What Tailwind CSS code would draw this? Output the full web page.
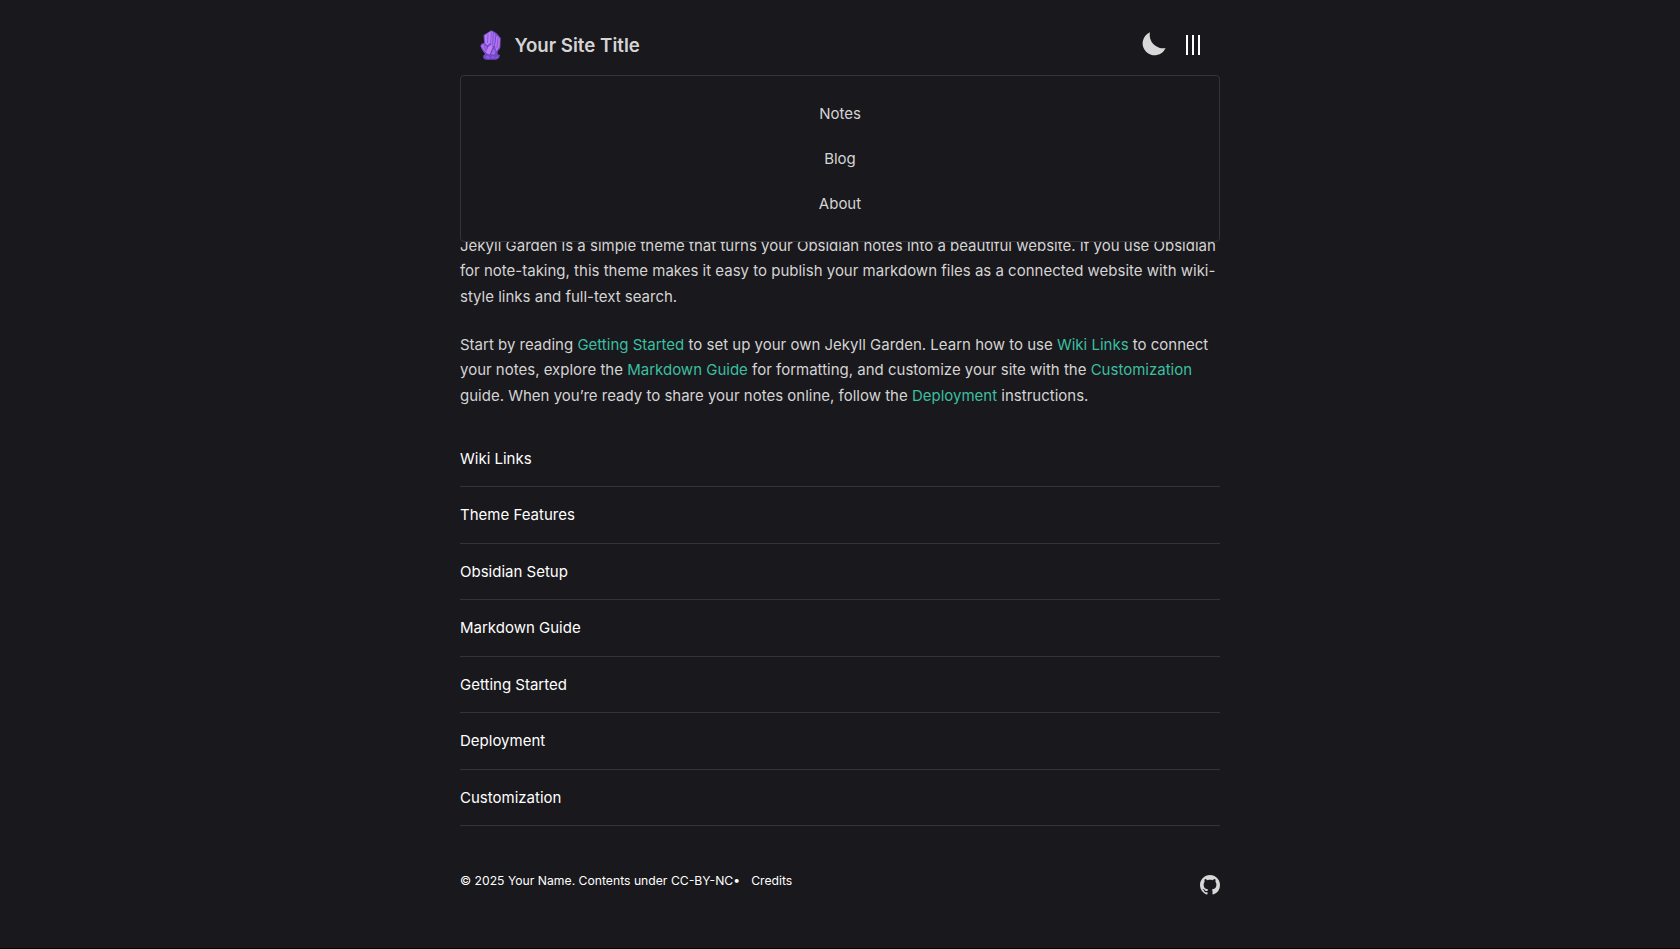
<!DOCTYPE html>
<html lang="en">
<head>
<meta charset="utf-8">
<title>Your Site Title</title>
<script src="https://cdn.jsdelivr.net/npm/@tailwindcss/browser@4"></script>
</head>
<body class="h-[949px] overflow-hidden border-b border-black bg-[#19181c] font-['Inter',sans-serif] text-[15px] leading-[25.5px] text-[#d4d4d4]">
<div class="relative mx-auto w-[760px]">
  <header class="flex h-[75px] items-start justify-between px-5 pt-[30px]">
    <a class="flex items-center" href="#">
      <svg class="h-[30px] w-[22px]" viewBox="0 0 22 30">
        <path d="M3.500 5 11.500 .2 16.500 3 20.800 8 20.300 18 17.500 22 18 24.500 20 25 19 28 16 29.800 6 29.800 3.500 28.500 3 26 5 24 2 20 .3 16 1.500 13.500 4 13z" fill="#7048c8"/>
        <path d="M4.500 5.500 11 1 10.500 13 7 15.500 5 13z" fill="#b57af6"/>
        <path d="M11.500 1 15.500 4 14.300 15.500 10.800 17z" fill="#a66ff4"/>
        <path d="M16.500 5 20 9 19.500 17 16 21.500 15 16z" fill="#b973ec"/>
        <path d="M.8 16 3.500 13.800 6.500 17 7 22 5 22z" fill="#ac6dec"/>
        <path d="M8 17.500 10 15 12.800 17 9.500 24.500 6 23z" fill="#bf7ef0"/>
        <path d="M11 24 13.800 18.500 15.500 22.500 14 25z" fill="#a068e8"/>
        <path d="M4.500 27 8 25.500 10 27.500 9 29zM11 28 13 25.500 15 28zM15.500 27 19 26 16 28.800z" fill="#9258dc"/>
        <path d="M8 4 7.500 13M13.500 3 12.500 15M18 8 17 18M4 15 6 21" fill="none" stroke="#7048c8" stroke-width=".7"/>
      </svg>
      <span class="relative top-px ml-[12.4px] text-[18.7px] font-semibold leading-[30px]">Your Site Title</span>
    </a>
    <div class="flex items-start">
      <svg class="mt-[2px] h-6 w-6" viewBox="0 0 24 24" fill="#d8d8d8"><path d="M8 .2A13.400 13.400 0 0 0 23.600 16.100 12 12 0 1 1 8 .2z"/></svg>
      <div class="ml-5 mt-[5px] flex h-5 gap-1"><i class="w-0.5 bg-white"></i><i class="w-0.5 bg-white"></i><i class="w-0.5 bg-white"></i></div>
    </div>
  </header>
  <nav class="absolute left-0 top-[75px] z-10 flex h-[167px] w-full flex-col items-center rounded-[4px] border border-[#343338] bg-[#19181c] pt-[15px]">
    <a class="h-[45px] leading-[45px]" href="#">Notes</a>
    <a class="h-[45px] leading-[45px]" href="#">Blog</a>
    <a class="h-[45px] leading-[45px]" href="#">About</a>
  </nav>
  <main class="pt-[157.7px]">
    <p class="mb-[22.5px]">Jekyll Garden is a simple theme that turns your Obsidian notes into a beautiful website. If you use Obsidian for note-taking, this theme makes it easy to publish your markdown files as a connected website with wiki-style links and full-text search.</p>
    <p class="mb-[22.5px]">Start by reading <a class="text-[#3bbfa1]" href="#">Getting Started</a> to set up your own Jekyll Garden. Learn how to use <a class="text-[#3bbfa1]" href="#">Wiki Links</a> to connect your notes, explore the <a class="text-[#3bbfa1]" href="#">Markdown Guide</a> for formatting, and customize your site with the <a class="text-[#3bbfa1]" href="#">Customization</a> guide. When you’re ready to share your notes online, follow the <a class="text-[#3bbfa1]" href="#">Deployment</a> instructions.</p>
    <ul class="text-white">
      <li class="border-b border-[#343338] py-[15px]">Wiki Links</li>
      <li class="border-b border-[#343338] py-[15px]">Theme Features</li>
      <li class="border-b border-[#343338] py-[15px]">Obsidian Setup</li>
      <li class="border-b border-[#343338] py-[15px]">Markdown Guide</li>
      <li class="border-b border-[#343338] py-[15px]">Getting Started</li>
      <li class="border-b border-[#343338] py-[15px]">Deployment</li>
      <li class="border-b border-[#343338] py-[15px]">Customization</li>
    </ul>
  </main>
  <footer class="mt-[44.8px] flex items-start justify-between text-[12.2px] leading-[20.4px] text-white">
    <div class="flex"><span>© 2025 Your Name. Contents under CC-BY-NC•</span><a class="ml-[11px]" href="#">Credits</a></div>
    <svg class="mt-[4px] h-5 w-5" viewBox="0 0 16 16" fill="#d8d8d8"><path d="M8 0C3.580 0 0 3.580 0 8c0 3.540 2.290 6.530 5.470 7.590.4.070.55-.17.55-.38 0-.19-.01-.82-.01-1.490-2.010.37-2.530-.49-2.690-.94-.09-.23-.48-.94-.82-1.130-.28-.15-.68-.52-.01-.53.63-.01 1.080.58 1.230.82.72 1.210 1.870.87 2.330.66.070-.52.28-.87.51-1.070-1.780-.2-3.640-.89-3.640-3.950 0-.87.31-1.590.82-2.150-.08-.2-.36-1.020.08-2.120 0 0 .67-.21 2.200.82.64-.18 1.320-.27 2-.27s1.360.09 2 .27c1.530-1.040 2.200-.82 2.200-.82.44 1.100.16 1.920.08 2.120.51.56.82 1.270.82 2.150 0 3.070-1.870 3.750-3.650 3.950.29.25.54.73.54 1.480 0 1.070-.01 1.930-.01 2.200 0 .21.15.46.55.38A8.010 8.010 0 0 0 16 8c0-4.420-3.580-8-8-8z"/></svg>
  </footer>
</div>
</body>
</html>
